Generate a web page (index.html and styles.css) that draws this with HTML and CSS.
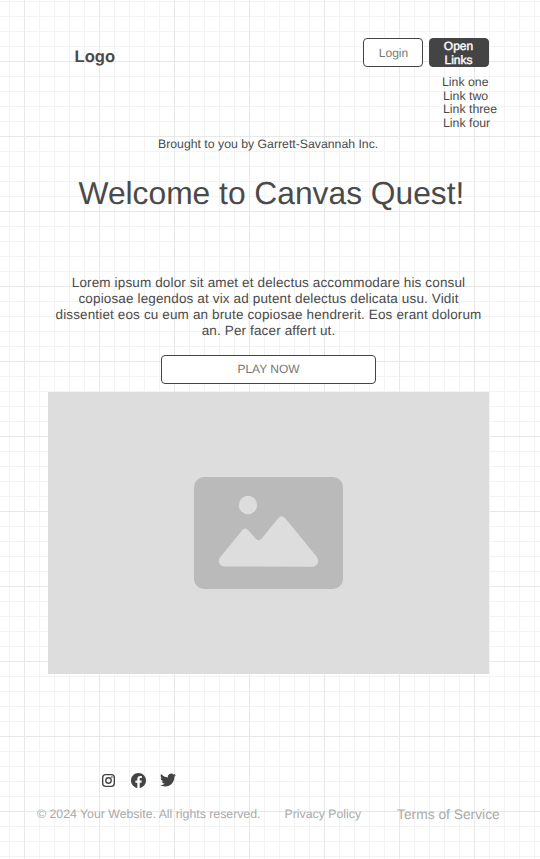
FILE: index.html
```
<!DOCTYPE html>
<html lang="en">
<head>
<meta charset="utf-8">
<title>Canvas Quest</title>
<link rel="stylesheet" href="styles.css">
</head>
<body>
<header class="header">
  <div class="logo">Logo</div>
  <nav class="nav">
    <div class="buttons">
      <button class="btn login">Login</button>
      <button class="btn open">Open<br>Links</button>
    </div>
    <ul class="links">
      <li class="first">Link one</li>
      <li>Link two</li>
      <li>Link three</li>
      <li>Link four</li>
    </ul>
  </nav>
</header>
<main class="main">
  <p class="byline">Brought to you by Garrett-Savannah Inc.</p>
  <h1 class="title">Welcome to Canvas Quest!</h1>
  <p class="intro">Lorem ipsum dolor sit amet et delectus accommodare his consul<br>copiosae legendos at vix ad putent delectus delicata usu. Vidit<br>dissentiet eos cu eum an brute copiosae hendrerit. Eos erant dolorum<br>an. Per facer affert ut.</p>
  <button class="btn play">PLAY NOW</button>
  <div class="picture">
    <svg width="149" height="112" viewBox="0 0 149 112">
      <rect width="149" height="112" rx="10" fill="#bababa"/>
      <circle cx="54" cy="28" r="9.2" fill="#ddd"/>
      <path d="M26 80.500L48 53.500Q51.300 49.500 54.500 53.500L61.500 61.500Q64.500 65 67.700 61.500L84 41.500Q87.500 37 91.500 41.500L122.500 79.500C126 84 123.500 89.700 118 89.700L31 89.500C25.500 89.500 23 84.500 26 80.500Z" fill="#ddd"/>
    </svg>
  </div>
</main>
<footer class="footer">
  <div class="social">
    <svg width="13" height="13" viewBox="0 0 24 24" fill="none" stroke="#444" stroke-width="2.500"><rect x="1.250" y="1.250" width="21.500" height="21.500" rx="5.500"/><circle cx="12" cy="12" r="5"/><circle cx="18.300" cy="5.700" r="1.500" fill="#444" stroke="none"/></svg>
    <svg width="15" height="15" viewBox="0 0 24 24" fill="#444"><path d="M24 12.070C24 5.400 18.630 0 12 0S0 5.400 0 12.070c0 6.030 4.390 11.020 10.130 11.930v-8.440H7.080v-3.490h3.050V9.410c0-3.020 1.790-4.690 4.530-4.690 1.310 0 2.680.24 2.680.24v2.970h-1.510c-1.490 0-1.960.93-1.960 1.890v2.250h3.330l-.53 3.490h-2.800V24C19.610 23.090 24 18.100 24 12.070z"/></svg>
    <svg width="16" height="16" viewBox="0 0 24 24" fill="#444"><path d="M23.950 4.570a10 10 0 0 1-2.820.77 4.960 4.960 0 0 0 2.160-2.720c-.95.550-2 .950-3.130 1.180a4.920 4.920 0 0 0-8.380 4.480C7.690 8.100 4.070 6.130 1.640 3.160a4.820 4.820 0 0 0-.67 2.480c0 1.710.87 3.210 2.190 4.100a4.900 4.900 0 0 1-2.230-.62v.06a4.920 4.920 0 0 0 3.950 4.830 5 5 0 0 1-2.210.08 4.940 4.940 0 0 0 4.600 3.420A9.870 9.870 0 0 1 0 19.540a13.990 13.990 0 0 0 7.550 2.210c9.050 0 14-7.500 14-13.980 0-.21 0-.42-.02-.63a9.940 9.940 0 0 0 2.420-2.570z"/></svg>
  </div>
  <div class="legal">
    <span class="copyright">© 2024 Your Website. All rights reserved.</span>
    <span class="privacy">Privacy Policy</span>
    <span class="terms">Terms of Service</span>
  </div>
</footer>
</body>
</html>
```
FILE: styles.css
```
* { box-sizing: border-box; }
body {
  margin: 0;
  width: 540px;
  height: 859px;
  overflow: hidden;
  font-family: "Liberation Sans", Arial, sans-serif;
  font-size: 12px;
  text-rendering: geometricPrecision;
  color: #4a4a4a;
  background-color: #fff;
  background-image:
    linear-gradient(to right, #e8e8e8 1px, transparent 1px),
    linear-gradient(to bottom, #e8e8e8 1px, transparent 1px),
    linear-gradient(to right, #f3f3f3 1px, transparent 1px),
    linear-gradient(to bottom, #f3f3f3 1px, transparent 1px);
  background-size: 75px 75px, 75px 75px, 15px 15px, 15px 15px;
  background-position: 24px 0, 0 61px, 9px 0, 0 1px;
}
p, h1, ul { margin: 0; padding: 0; }
.header {
  display: flex;
  height: 137px;
  padding: 38px 0 0 74px;
}
.logo {
  width: 289px;
  padding: 9px 0 0 0.5px;
  font-size: 16.600px;
  font-weight: bold;
  line-height: 20px;
}
.buttons { display: flex; gap: 6px; }
.btn {
  display: block;
  margin: 0;
  padding: 0;
  height: 29px;
  border: 1px solid #444;
  border-radius: 4px;
  background: #fff;
  color: #777;
  font-family: inherit;
  font-size: 12px;
  text-rendering: inherit;
}
.login { width: 60px; padding-left: 1px; }
.open {
  width: 60px;
  padding-right: 1px;
  background: #444;
  color: #fff;
  line-height: 14px;
  -webkit-text-stroke: 0.4px #fff;
}
.links {
  list-style: none;
  padding: 9px 0 0 80px;
  font-size: 12.300px;
  line-height: 13.600px;
}
.links .first { margin-left: -1px; }
.byline { padding-left: 158px; font-size: 12.280px; line-height: 14px; }
.title {
  padding: 22px 0 0 78.5px;
  font-size: 31.750px;
  font-weight: normal;
  line-height: 40px;
  white-space: nowrap;
}
.intro {
  width: 441px;
  margin: 62px 0 0 48px;
  font-size: 13.500px;
  line-height: 16px;
  text-align: center;
  white-space: nowrap;
  letter-spacing: 0.140px;
}
.play { width: 215px; margin: 16px 0 8px 161px; padding-bottom: 2px; }
.picture {
  display: flex;
  align-items: center;
  justify-content: center;
  width: 441px;
  height: 282px;
  margin-left: 48px;
  background: #ddd;
}
.social {
  display: flex;
  align-items: center;
  height: 16px;
  margin: 98px 0 0 102px;
}
.social svg + svg { margin-left: 16px; }
.social svg + svg + svg { margin-left: 13.5px; }
.legal {
  display: flex;
  padding: 18px 0 0 37px;
  font-size: 12.300px;
  line-height: 16px;
  color: #aaa;
  white-space: nowrap;
}
.copyright { width: 247.5px; }
.privacy { width: 112.5px; }
.terms { padding-top: 1px; font-size: 13.800px; }
```
